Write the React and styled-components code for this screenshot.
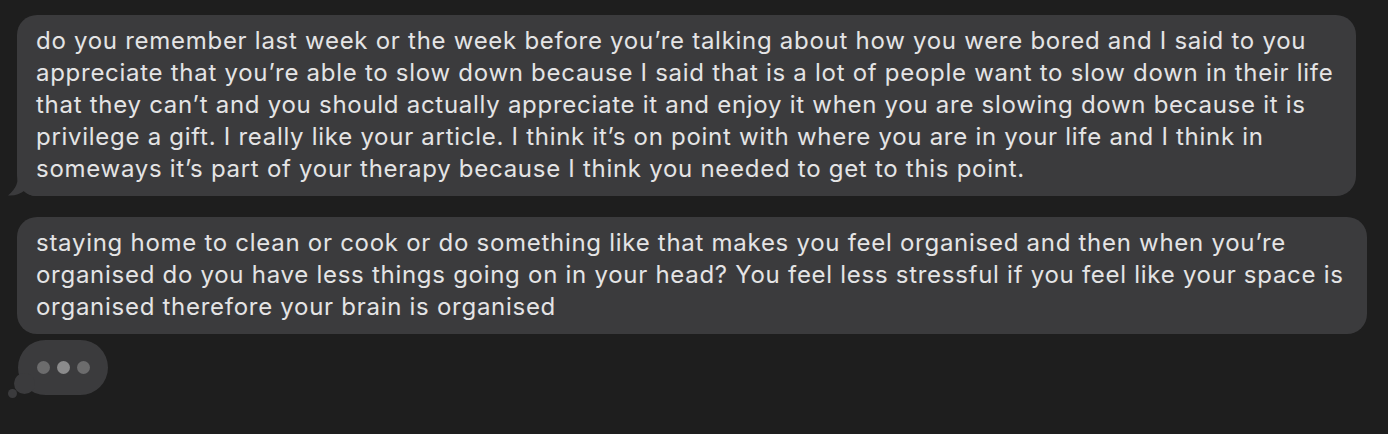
import styled, { createGlobalStyle } from 'styled-components';

const GlobalStyle = createGlobalStyle`
  html, body {
    margin: 0;
    padding: 0;
    background: #1e1e1e;
  }
  body {
    font-family: Inter, "Noto Sans", sans-serif;
  }
`;

const Thread = styled.div`
  display: flex;
  flex-direction: column;
  align-items: flex-start;
  padding: 15px 0 0 17px;
  width: 1388px;
  height: 434px;
  box-sizing: border-box;
`;

const Bubble = styled.div`
  position: relative;
  background: #3b3b3d;
  color: #e4e4e5;
  border-radius: 20px;
  padding: 10px 23px 11px 19px;
  font-size: 24px;
  letter-spacing: 0.72px;
  line-height: 32px;
  margin-bottom: ${(p) => p.gap}px;
`;

const Line = styled.span`
  display: block;
  white-space: nowrap;
`;

const Tail = styled.svg`
  position: absolute;
  left: -10px;
  bottom: 0;
  width: 30px;
  height: 22px;
`;

const Typing = styled.div`
  position: relative;
  display: flex;
  align-items: center;
  gap: 7px;
  margin-left: 1px;
  width: 90px;
  height: 55px;
  box-sizing: border-box;
  padding-left: 19px;
  border-radius: 28px;
  background: #3b3b3d;
`;

const Dot = styled.span`
  width: 13px;
  height: 13px;
  border-radius: 50%;
  background: ${(p) => (p.lit ? '#8b8b8c' : '#6c6c6d')};
`;

const Puff = styled.span`
  position: absolute;
  border-radius: 50%;
  background: #3b3b3d;
  left: ${(p) => p.x}px;
  top: ${(p) => p.y}px;
  width: ${(p) => p.size}px;
  height: ${(p) => p.size}px;
`;

const first = [
  'do you remember last week or the week before you’re talking about how you were bored and I said to you',
  'appreciate that you’re able to slow down because I said that is a lot of people want to slow down in their life',
  'that they can’t and you should actually appreciate it and enjoy it when you are slowing down because it is',
  'privilege a gift. I really like your article. I think it’s on point with where you are in your life and I think in',
  'someways it’s part of your therapy because I think you needed to get to this point.',
];

const second = [
  'staying home to clean or cook or do something like that makes you feel organised and then when you’re',
  'organised do you have less things going on in your head? You feel less stressful if you feel like your space is',
  'organised therefore your brain is organised',
];

const App = () => {
  return (
    <>
      <GlobalStyle />
      <Thread>
        <Bubble gap={21}>
          {first.map((l) => (
            <Line key={l}>{l}</Line>
          ))}
          <Tail viewBox="0 0 30 22">
            <path d="M11 0 C11 8 10 14 1 21.5 C8 22 13 20 17 17 C20 20 24 22 30 22 L30 0 Z" fill="#3b3b3d" />
          </Tail>
        </Bubble>
        <Bubble gap={6}>
          {second.map((l) => (
            <Line key={l}>{l}</Line>
          ))}
        </Bubble>
        <Typing>
          <Dot />
          <Dot lit />
          <Dot />
          <Puff x={-4} y={33} size={21} />
          <Puff x={-10} y={49} size={9} />
        </Typing>
      </Thread>
    </>
  );
};

export default App;
